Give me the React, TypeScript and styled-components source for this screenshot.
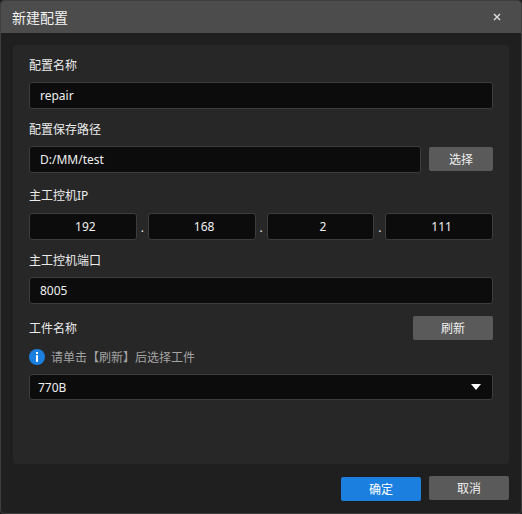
import * as React from 'react'
import styled, { createGlobalStyle } from 'styled-components'

const GlobalStyle = createGlobalStyle`
    html, body {
        margin: 0;
        padding: 0;
        background: #1c1c1c;
    }
`

const fontStack = `"Noto Sans", "Noto Sans CJK SC", sans-serif`

const ipParts = ['192', '168', '2', '111']

export default function App() {
    return (
        <>
            <GlobalStyle />
            <Dialog>
                <TitleBar>
                    <Title>新建配置</Title>
                    <CloseIcon width="8" height="8" viewBox="0 0 8 8">
                        <path d="M1 1 L7 7 M7 1 L1 7" stroke="#e0e0e0" strokeWidth="1.4" fill="none" />
                    </CloseIcon>
                </TitleBar>
                <Body>
                    <Panel>
                        <FieldLabel $height={37}>配置名称</FieldLabel>
                        <TextBox>repair</TextBox>

                        <FieldLabel $height={37}>配置保存路径</FieldLabel>
                        <PathRow>
                            <TextBox>D:/MM/test</TextBox>
                            <SmallButton>选择</SmallButton>
                        </PathRow>

                        <FieldLabel $height={40}>主工控机IP</FieldLabel>
                        <IpRow>
                            {ipParts.map((part, i) => (
                                <React.Fragment key={i}>
                                    {i > 0 && <IpDot>.</IpDot>}
                                    <IpBox>{part}</IpBox>
                                </React.Fragment>
                            ))}
                        </IpRow>

                        <FieldLabel $height={37}>主工控机端口</FieldLabel>
                        <TextBox>8005</TextBox>

                        <PartRow>
                            <PartLabel>工件名称</PartLabel>
                            <GreyButton>刷新</GreyButton>
                        </PartRow>
                        <Hint>
                            <svg width="16" height="16" viewBox="0 0 16 16">
                                <circle cx="8" cy="8" r="8" fill="#1b7fe0" />
                                <rect x="7" y="3" width="2" height="2" fill="#fff" />
                                <rect x="7" y="6.2" width="2" height="6.6" fill="#fff" />
                            </svg>
                            <HintText>请单击【刷新】后选择工件</HintText>
                        </Hint>
                        <SelectBox>
                            <span>770B</span>
                            <svg width="10" height="6" viewBox="0 0 10 6">
                                <path d="M0 0 H10 L5 6 Z" fill="#fff" />
                            </svg>
                        </SelectBox>
                    </Panel>
                    <Footer>
                        <BlueButton>确定</BlueButton>
                        <GreyButton>取消</GreyButton>
                    </Footer>
                </Body>
            </Dialog>
        </>
    )
}

const Dialog = styled('div')`
    width: 522px;
    height: 514px;
    box-sizing: border-box;
    border: 1px solid #3f3f3f;
    border-radius: 4px;
    background: #1f1f1f;
    color: #fff;
    font-family: ${fontStack};
    font-size: 12px;
    overflow: hidden;
    display: flex;
    flex-direction: column;
`

const TitleBar = styled('div')`
    height: 32px;
    flex: none;
    background: #4c4c4c;
    display: flex;
    align-items: center;
    justify-content: space-between;
    padding: 0 20px 0 11px;
`

const Title = styled('div')`
    font-size: 14px;
    color: #f2f2f2;
`

const CloseIcon = styled('svg')`
    display: block;
`

const Body = styled('div')`
    flex: 1;
    display: flex;
    flex-direction: column;
    padding: 12px 12px 0;
`

const Panel = styled('div')`
    height: 419px;
    box-sizing: border-box;
    background: #272727;
    border-radius: 4px;
    padding: 0 16px;
    display: flex;
    flex-direction: column;
`

const FieldLabel = styled('div')<{ $height: number }>`
    height: ${(p) => p.$height}px;
    line-height: ${(p) => p.$height + 5}px;
    color: #ececec;
    flex: none;
`

const TextBox = styled('div')`
    flex: 1;
    min-height: 27px;
    max-height: 27px;
    box-sizing: border-box;
    background: #0c0c0c;
    border: 1px solid #3d3d3d;
    border-radius: 3px;
    padding: 0 10px;
    line-height: 25px;
    color: #f0f0f0;
`

const PathRow = styled('div')`
    display: flex;
    align-items: flex-start;
    gap: 8px;
    flex: none;
`

const IpRow = styled('div')`
    display: flex;
    flex: none;
`

const IpBox = styled(TextBox)`
    text-align: center;
    padding: 0 0 0 5px;
`

const IpDot = styled('div')`
    flex: 0 0 11px;
    height: 27px;
    text-align: center;
    line-height: 30px;
    color: #e6e6e6;
`

const PartRow = styled('div')`
    display: flex;
    align-items: center;
    justify-content: space-between;
    margin-top: 12px;
    flex: none;
`

const PartLabel = styled('div')`
    color: #ececec;
`

const Hint = styled('div')`
    display: flex;
    align-items: center;
    gap: 6px;
    height: 34px;
    flex: none;
`

const HintText = styled('span')`
    color: #a3a3a3;
`

const SelectBox = styled('div')`
    height: 26px;
    flex: none;
    box-sizing: border-box;
    background: #0c0c0c;
    border: 1px solid #3d3d3d;
    border-radius: 3px;
    padding: 0 11px 0 8px;
    display: flex;
    align-items: center;
    justify-content: space-between;
    color: #f0f0f0;
`

const Footer = styled('div')`
    display: flex;
    justify-content: flex-end;
    align-items: flex-start;
    gap: 8px;
    padding-top: 12px;
`

const GreyButton = styled('button')`
    width: 80px;
    height: 24px;
    flex: none;
    border: none;
    border-radius: 2px;
    background: #5a5a5a;
    color: #f0f0f0;
    font-family: ${fontStack};
    font-size: 12px;
    padding: 0;
`

const SmallButton = styled(GreyButton)`
    width: 64px;
    margin-top: 1px;
`

const BlueButton = styled('button')`
    width: 80px;
    height: 24px;
    margin-top: 1px;
    border: none;
    border-radius: 2px;
    background: #1b7fe0;
    color: #fff;
    font-family: ${fontStack};
    font-size: 12px;
    padding: 0;
`
